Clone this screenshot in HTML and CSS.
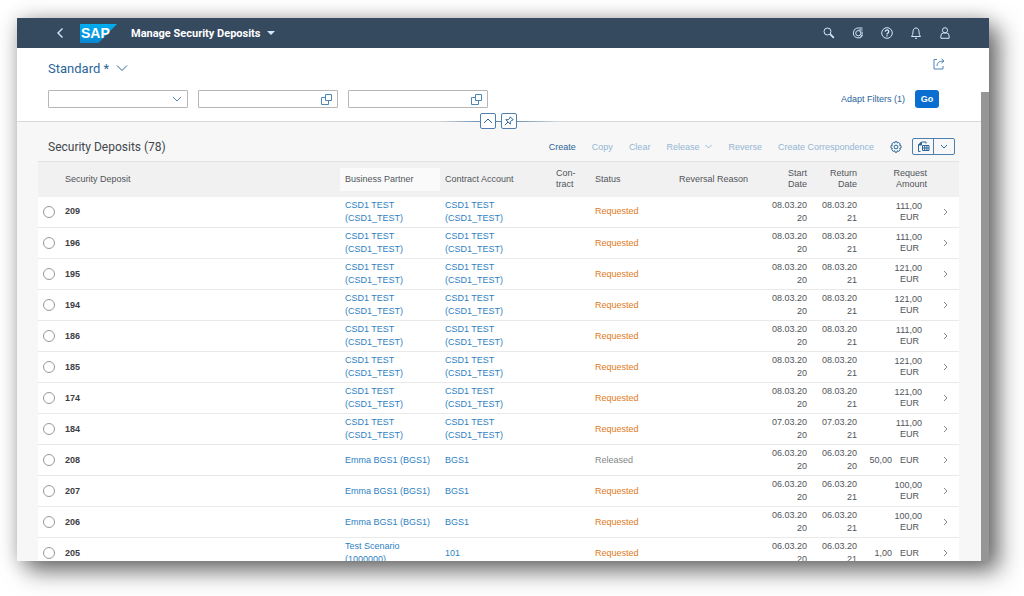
FILE: index.html
```html
<!DOCTYPE html>
<html lang="en">
<head>
    <meta charset="UTF-8">
    <meta name="viewport" content="width=device-width, initial-scale=1.0">
    <title>Manage Security Deposits</title>
    <link rel="stylesheet" href="styles.css">
</head>
<body>

    <div class="window">
        <header class="shell">
            <button class="shell-btn back" aria-label="Back">
                <svg width="8" height="12" viewBox="0 0 8 12"><path d="M6.500 1.500 2 6l4.500 4.500" stroke-width="1.400"/></svg>
            </button>
            <a class="logo" href="#" aria-label="SAP">
                <svg width="37" height="19" viewBox="0 0 37 19">
                    <defs>
                        <linearGradient id="sap" x1="0" y1="0" x2="0" y2="1">
                            <stop offset="0" stop-color="#00aeef"/>
                            <stop offset="1" stop-color="#0a86d0"/>
                        </linearGradient>
                    </defs>
                    <path d="M0 0h37L18.500 19H0z" fill="url(#sap)"/>
                    <text x="1" y="14" class="logo-text">SAP</text>
                </svg>
            </a>
            <button class="app-title">Manage Security Deposits <span class="caret"></span></button>
            <div class="shell-icons">
                <button class="shell-btn" aria-label="Search">
                    <svg width="12" height="12" viewBox="0 0 12 12"><circle cx="4.500" cy="4.500" r="3.500"/><path d="m7.200 7.200 3.600 3.600" stroke-width="1.800"/></svg>
                </button>
                <button class="shell-btn" aria-label="CoPilot">
                    <svg width="12" height="12" viewBox="0 0 12 12"><path d="M10.500 1H6.500a5 5 0 1 0 4.300 7.500"/><circle cx="6.300" cy="6.200" r="2.600"/><path d="M10.500 3H6.500M10 4.500q1 3-1.500 5.500"/></svg>
                </button>
                <button class="shell-btn" aria-label="Help">
                    <svg width="12" height="12" viewBox="0 0 12 12"><circle cx="6" cy="6" r="5.300"/><path d="M4.300 4.700a1.700 1.700 0 1 1 2.600 1.400Q6 6.600 6 7.400M6 8.300v1.200" stroke-width="1.300"/></svg>
                </button>
                <button class="shell-btn" aria-label="Notifications">
                    <svg width="12" height="12" viewBox="0 0 12 12"><path d="M1.500 9.500Q3 8 3 5c0-2.500 1-4 3-4s3 1.500 3 4q0 3 1.500 4.500z"/><path d="M5 11.300h2"/></svg>
                </button>
                <button class="shell-btn" aria-label="User">
                    <svg width="12" height="12" viewBox="0 0 12 12"><circle cx="6" cy="3.300" r="2.600"/><path d="M1.900 11.300V9q0-3 2.500-3h3.200q2.500 0 2.500 3v2.300z"/></svg>
                </button>
            </div>
        </header>

        <div class="content">
            <main class="page">
                <section class="filters">
                    <div class="variant-row">
                        <button class="variant">Standard *
                            <svg width="12" height="8" viewBox="0 0 12 8"><path d="m1 1.500 5 5 5-5"/></svg>
                        </button>
                        <button class="icon-btn" aria-label="Share">
                            <svg width="12" height="12" viewBox="0 0 12 12"><path d="M4 1.500H1v9.500h9V8M4 8q0-5 6.500-5M8.500.8 11 3 8.500 5.200"/></svg>
                        </button>
                    </div>
                    <div class="filter-row">
                        <div class="field">
                            <select aria-label="Filter"><option></option></select>
                            <svg width="10" height="6" viewBox="0 0 10 6"><path d="m1 1 4 4 4-4"/></svg>
                        </div>
                        <div class="field">
                            <input type="text" aria-label="Business Partner">
                            <button class="icon-btn" aria-label="Open value help">
                                <svg width="11" height="11" viewBox="0 0 11 11"><path d="M4.500.5h6v6h-6zM4.500 3.500H.5v7h7v-4"/></svg>
                            </button>
                        </div>
                        <div class="field">
                            <input type="text" aria-label="Contract Account">
                            <button class="icon-btn" aria-label="Open value help">
                                <svg width="11" height="11" viewBox="0 0 11 11"><path d="M4.500.5h6v6h-6zM4.500 3.500H.5v7h7v-4"/></svg>
                            </button>
                        </div>
                        <button class="adapt">Adapt Filters (1)</button>
                        <button class="go">Go</button>
                    </div>
                    <div class="header-toggle">
                        <button aria-label="Collapse header">
                            <svg width="10" height="6" viewBox="0 0 10 6"><path d="m1 5 4-4 4 4"/></svg>
                        </button>
                        <button aria-label="Pin header">
                            <svg width="10" height="10" viewBox="0 0 10 10"><path d="m6.200.8 3 3-1.200.3L6.300 5.800v2.400L1.800 3.700h2.400L5.900 2zM4 6 .8 9.200"/></svg>
                        </button>
                    </div>
                </section>

                <section class="deposits">
                    <div class="toolbar">
                        <h2>Security Deposits (78)</h2>
                        <button class="create">Create</button>
                        <button disabled>Copy</button>
                        <button disabled>Clear</button>
                        <button disabled>Release
                            <svg width="7" height="5" viewBox="0 0 7 5"><path d="m.5 1 3 3 3-3"/></svg>
                        </button>
                        <button disabled>Reverse</button>
                        <button disabled>Create Correspondence</button>
                        <button class="settings" aria-label="Settings">
                            <svg width="12" height="12" viewBox="0 0 12 12"><path d="M5 .7h2l.4 1.400 1.300-.7 1.600 1.600-.8 1.300 1.500.5v2.200l-1.500.5.8 1.300-1.600 1.600-1.300-.7-.4 1.500H5l-.4-1.500-1.300.7-1.600-1.600.8-1.300L1 7V4.800l1.500-.5L1.700 3l1.600-1.600 1.300.7z"/><circle cx="6" cy="6" r="1.900"/></svg>
                        </button>
                        <div class="split">
                            <button aria-label="Export">
                                <svg width="13" height="12" viewBox="0 0 13 12"><path d="M3.500 10.500h-2V4l3-3h4.500v1.500"/><path d="M4.500 1v3h-3z" fill="currentColor"/><path d="M5.500 4.500h6.500v5H5.500zM5.500 7H12M7.700 4.500v5M9.900 4.500v5"/></svg>
                            </button>
                            <button class="split-menu" aria-label="Export options">
                                <svg width="8" height="5" viewBox="0 0 8 5"><path d="m1 1 3 3 3-3"/></svg>
                            </button>
                        </div>
                    </div>

                    <table>
                        <colgroup>
                            <col class="c-radio"><col><col class="c-link"><col class="c-link"><col class="c-contract"><col class="c-status"><col class="c-reason"><col class="c-start"><col class="c-return"><col class="c-amount"><col class="c-nav">
                        </colgroup>
                        <thead>
                            <tr>
                                <th></th>
                                <th>Security Deposit</th>
                                <th class="sorted"><div>Business Partner</div></th>
                                <th>Contract Account</th>
                                <th class="contract"><div>Con-<br>tract</div></th>
                                <th>Status</th>
                                <th>Reversal Reason</th>
                                <th class="right">Start<br>Date</th>
                                <th class="right">Return<br>Date</th>
                                <th class="right">Request<br>Amount</th>
                                <th></th>
                            </tr>
                        </thead>
                        <tbody id="rows"></tbody>
                    </table>
                </section>
            </main>
            <div class="scrollbar"><div class="thumb"></div></div>
        </div>
    </div>

    <script src="script.js"></script>
</body>
</html>
```
FILE: styles.css
```css
* {
    box-sizing: border-box;
}
body {
    font-family: "Liberation Sans", Arial, sans-serif;
    font-size: 9px;
    color: #51555a;
    background: #fff;
    margin: 0;
    height: 100vh;
    padding: 18px 35px 35px 17px;
}
button {
    font: inherit;
    color: inherit;
    background: none;
    border: 0;
    padding: 0;
    display: flex;
    align-items: center;
    justify-content: center;
}
svg {
    display: block;
    fill: none;
    stroke: currentColor;
}
a {
    color: #2e7fc2;
    text-decoration: none;
}
.window {
    height: 100%;
    display: flex;
    flex-direction: column;
    box-shadow: 10px 10px 22px rgba(0, 0, 0, 0.55), 0 0 18px rgba(0, 0, 0, 0.2);
}

/* shell bar */
.shell {
    display: flex;
    align-items: center;
    height: 30px;
    flex: none;
    padding: 0 38px;
    background: #354a5f;
    color: #d1e8ff;
}
.back {
    width: 10px;
    margin-right: 15px;
}
.logo-text {
    font: bold 14px "Liberation Sans", sans-serif;
    fill: #fff;
    stroke: none;
}
.logo svg {
    stroke: none;
}
.app-title {
    margin-left: 14px;
    gap: 6px;
    font-family: Roboto, sans-serif;
    font-size: 11px;
    font-weight: bold;
    color: #fff;
}
.caret {
    border: 4px solid transparent;
    border-top-color: #d1e8ff;
    border-bottom: 0;
}
.shell-icons {
    display: flex;
    gap: 17px;
    margin-left: auto;
}

.content {
    flex: 1;
    min-height: 0;
    display: flex;
}
.page {
    flex: 1;
    overflow: hidden;
    background: #f7f7f7;
}
.scrollbar {
    width: 8px;
    padding-top: 44px;
    background: #fff;
    display: flex;
}
.thumb {
    flex: 1;
    background: #969696;
}

/* filter bar */
.filters {
    position: relative;
    height: 74px;
    padding: 12px 42px 0 31px;
    background: #fff;
    border-bottom: 1px solid #d9d9d9;
    color: #2b659b;
}
.variant-row {
    display: flex;
    justify-content: space-between;
    height: 16px;
}
.variant {
    gap: 7px;
    font-family: Roboto, sans-serif;
    font-size: 13px;
}
.icon-btn {
    color: #4f86b8;
}
.variant-row .icon-btn {
    height: 8px;
    margin-right: -6px;
}
.filter-row {
    display: flex;
    align-items: center;
    gap: 10px;
    margin-top: 14px;
}
.field {
    display: flex;
    align-items: center;
    width: 140px;
    height: 18px;
    padding-right: 5px;
    border: 1px solid #b4b6b8;
    border-radius: 1px;
    background: #fff;
    color: #4f86b8;
}
.field input,
.field select {
    flex: 1;
    min-width: 0;
    height: 14px;
    font: inherit;
    border: 0;
    padding: 0 4px;
    background: none;
    appearance: none;
}
.adapt {
    margin-left: auto;
}
.go {
    width: 24px;
    height: 18px;
    border-radius: 3px;
    background: #0a6ed1;
    color: #fff;
    font-weight: bold;
}
.header-toggle {
    position: absolute;
    left: 50%;
    bottom: -8px;
    width: 122px;
    margin-left: -62px;
    display: flex;
    justify-content: center;
    gap: 5px;
    background: linear-gradient(90deg, transparent, #5c89b5 40%, #5c89b5 60%, transparent) center / 100% 1px no-repeat;
}
.header-toggle button {
    width: 16px;
    height: 16px;
    border: 1px solid #4f7fae;
    border-radius: 2px;
    background: #fff;
}

/* table toolbar */
.deposits {
    padding: 0 22px 0 21px;
}
.toolbar {
    display: flex;
    align-items: center;
    gap: 16px;
    height: 39px;
    padding: 10px 4px 0 10px;
    color: #2b659b;
}
.toolbar h2 {
    margin: 0 auto 0 0;
    font-family: Roboto, sans-serif;
    font-size: 12px;
    font-weight: normal;
    color: #43474b;
}
.toolbar button {
    gap: 6px;
}
.toolbar button:disabled {
    color: #94b6d5;
}
.split {
    display: flex;
    margin-left: -6px;
    border: 1px solid #4f7fae;
    border-radius: 2px;
}
.split button {
    width: 20px;
    height: 15px;
}
.split .split-menu {
    width: 21px;
    border-left: 1px solid #4f7fae;
}

/* deposits table */
table {
    width: 100%;
    table-layout: fixed;
    border-collapse: collapse;
}
.c-radio { width: 22px; }
.c-link { width: 100px; }
.c-contract { width: 50px; }
.c-status { width: 84px; }
.c-reason { width: 83px; }
.c-start { width: 55px; }
.c-return { width: 50px; }
.c-amount { width: 70px; }
.c-nav { width: 27px; }
th, td {
    padding: 0 5px;
    text-align: left;
    font-weight: normal;
    vertical-align: middle;
}
th {
    height: 35px;
    line-height: 11px;
    background: #f1f1f1;
    border-top: 1px solid #e2e2e2;
    white-space: nowrap;
}
th.sorted {
    padding: 0;
}
.sorted div {
    padding: 6px 5px;
    background: #fafafa;
}
.contract div {
    margin-left: 11px;
}
td {
    height: 31px;
    line-height: 13px;
    background: #fff;
    border-bottom: 1px solid #e9e9e9;
}
td input {
    display: block;
    appearance: none;
    width: 12px;
    height: 12px;
    margin: 0;
    border: 1px solid #96999c;
    border-radius: 50%;
}
td b {
    color: #3c4044;
}
.right {
    text-align: right;
}
.Requested {
    color: #e07b1a;
}
.Released {
    color: #84888b;
}
.amount {
    display: flex;
    flex-wrap: wrap;
    justify-content: flex-end;
    column-gap: 8px;
    margin-right: 5px;
    line-height: 11px;
}
.currency {
    padding-right: 3px;
}
.nav {
    padding-left: 11px;
    color: #84888b;
}
```
FILE: script.js
```js
const csd = ["CSD1 TEST (CSD1_TEST)", "CSD1 TEST (CSD1_TEST)"];
const bgs = ["Emma BGS1 (BGS1)", "BGS1"];

// id, [partner, account], status, start, return, amount
const deposits = [
    [209, csd, "Requested", "08.03.2020", "08.03.2021", "111,00"],
    [196, csd, "Requested", "08.03.2020", "08.03.2021", "111,00"],
    [195, csd, "Requested", "08.03.2020", "08.03.2021", "121,00"],
    [194, csd, "Requested", "08.03.2020", "08.03.2021", "121,00"],
    [186, csd, "Requested", "08.03.2020", "08.03.2021", "111,00"],
    [185, csd, "Requested", "08.03.2020", "08.03.2021", "121,00"],
    [174, csd, "Requested", "08.03.2020", "08.03.2021", "121,00"],
    [184, csd, "Requested", "07.03.2020", "07.03.2021", "111,00"],
    [208, bgs, "Released", "06.03.2020", "06.03.2020", "50,00"],
    [207, bgs, "Requested", "06.03.2020", "06.03.2021", "100,00"],
    [206, bgs, "Requested", "06.03.2020", "06.03.2021", "100,00"],
    [205, ["Test Scenario (1000000)", "101"], "Requested", "06.03.2020", "06.03.2021", "1,00"]
];

// the date columns are narrow, the year breaks in the middle
function date(d) {
    return d.slice(0, 8) + "<br>" + d.slice(8);
}

document.getElementById("rows").innerHTML = deposits.map(([id, [partner, account], status, start, end, amount]) => `
    <tr>
        <td><input type="radio" name="deposit" aria-label="Select ${id}"></td>
        <td><b>${id}</b></td>
        <td><a href="#">${partner.replace(" (C", "<br>(C")}</a></td>
        <td><a href="#">${account.replace(" (C", "<br>(C")}</a></td>
        <td></td>
        <td class="${status}">${status}</td>
        <td></td>
        <td class="right">${date(start)}</td>
        <td class="right">${date(end)}</td>
        <td><div class="amount"><span>${amount}</span><span class="currency">EUR</span></div></td>
        <td class="nav"><svg width="5" height="8" viewBox="0 0 5 8"><path d="m1 1 3 3-3 3"/></svg></td>
    </tr>`).join("");
```
